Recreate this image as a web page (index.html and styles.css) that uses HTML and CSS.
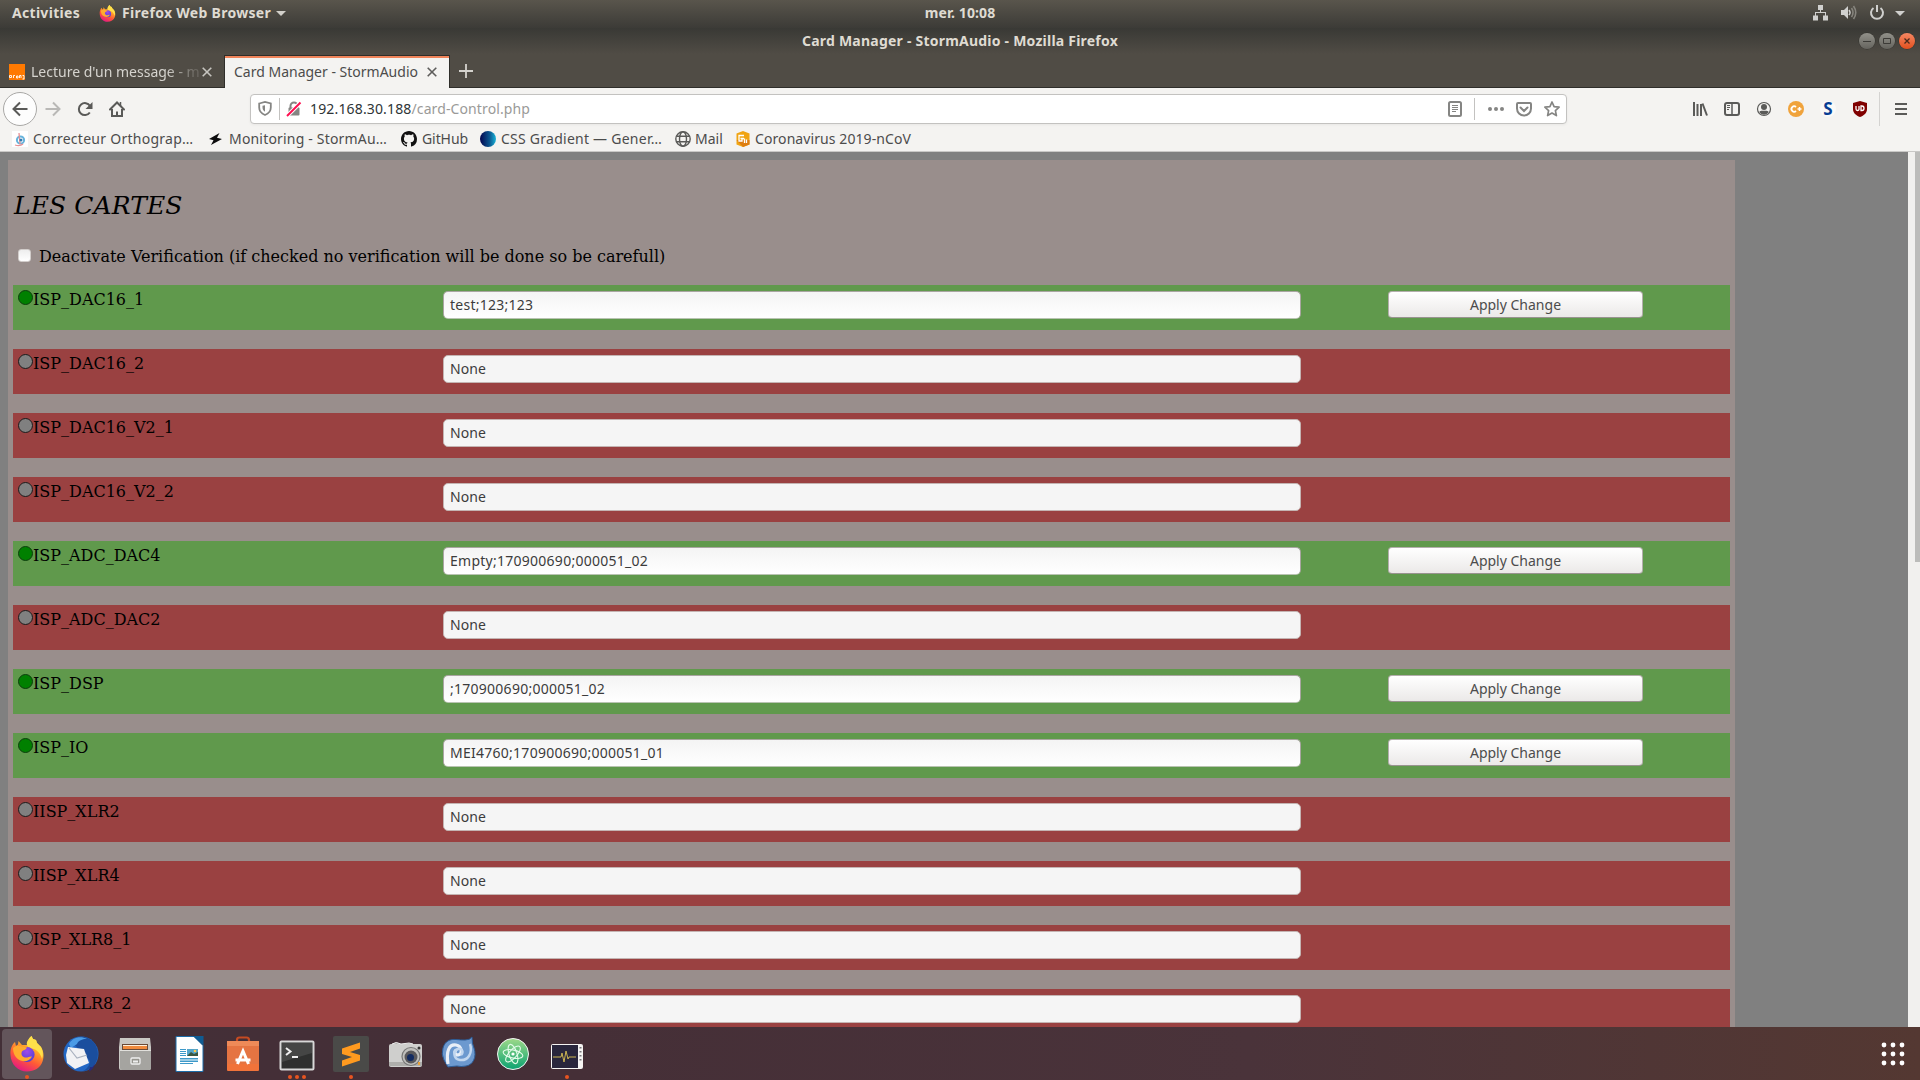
FILE: index.html
```html
<!DOCTYPE html>
<html lang="en">
<head>
<meta charset="utf-8">
<title>Card Manager - StormAudio</title>
<link rel="stylesheet" href="styles.css">
</head>
<body>
<svg class="defs" width="0" height="0">
  <defs>
    <linearGradient id="fox" x1=".8" y1="0" x2=".3" y2="1"><stop offset="0" stop-color="#fff44f"/><stop offset=".35" stop-color="#ffa92a"/><stop offset=".65" stop-color="#ff5a36"/><stop offset="1" stop-color="#e31587"/></linearGradient>
    <radialGradient id="globe" cx=".5" cy=".3" r=".7"><stop offset="0" stop-color="#a04be8"/><stop offset="1" stop-color="#4a3fd8"/></radialGradient>
    <symbol id="firefox" viewBox="0 0 36 36">
      <path fill="url(#fox)" d="M1.500 19C1 13 3 8.500 6 6l1 4 2-1.500L9.500 5l3.500 4h5c1-4 2-7 4.500-9l1.500 3 3 1 1 3 4 4c2.500 4 3.500 9 1.500 14.500C31.500 32 25 35.500 18 35.500 9 35.500 2 28.500 1.500 19z"/>
      <path fill="#ffe04a" d="M22.500 0l1.500 3 3 1 1 3 4 4c2 4 2.500 8 1 12-1-4-3-7-6-9-4-2-8-2-9-5s2-7 4.500-9z"/>
      <circle cx="18" cy="18.500" r="7.600" fill="url(#globe)"/>
      <path fill="#ffab2e" d="M4 12c3-3 6-2.500 9-1.500 2 .5 4 .5 5 1-1 2.500-4 2.500-5 4-1.500 3 .5 5.500 3 6 3 .6 4-1.500 7-1-2 4-7 6-11.500 4C6 22 4 17 4 12z"/>
    </symbol>
  </defs>
</svg>

<header class="topbar">
  <div class="topbar-left">
    <span class="activities">Activities</span>
    <svg class="app-icon" width="17" height="17"><use href="#firefox"/></svg>
    <span class="app-name">Firefox Web Browser</span>
    <svg class="caret" width="10" height="5"><path d="M0 0h10L5 5z" fill="#d2d0ca"/></svg>
  </div>
  <span class="clock">mer. 10:08</span>
  <div class="topbar-right">
    <svg width="16" height="16" viewBox="0 0 16 16" fill="#d0d0ce"><path d="M5 0h5v5H5zM0 10.500h5v5H0zM10 10.500h5v5h-5z"/><path d="M7 5h1v3h-1zM2 7h11v1H2zM2 7h1v4H2zM12 7h1v4h-1z"/></svg>
    <svg width="16" height="16" viewBox="0 0 16 16"><path d="M0 5h3l4-4v13l-4-4H0z" fill="#d0d0ce"/><path d="M8 5q2 2.500 0 5" stroke="#d0d0ce" fill="none" stroke-width="1.500"/><path d="M10.500 3q3 4.500 0 9M12.500 1q4.500 6.500 0 13" stroke="#86847d" fill="none" stroke-width="1.600"/></svg>
    <svg width="16" height="16" viewBox="0 0 16 16" fill="none" stroke="#d0d0ce" stroke-width="2"><path d="M4.500 3a6 6 0 1 0 7 0M8 0v7"/></svg>
    <svg width="10" height="5"><path d="M0 0h10L5 5z" fill="#d0d0ce"/></svg>
  </div>
</header>

<div class="titlebar">
  <span class="window-title">Card Manager - StormAudio - Mozilla Firefox</span>
  <div class="window-buttons">
    <span class="wbtn"><svg width="16" height="16"><path d="M4 8.500h8" stroke="#3c3b37" stroke-width="1"/></svg></span>
    <span class="wbtn"><svg width="16" height="16"><path d="M4.500 5.500h7v5h-7z" fill="none" stroke="#3c3b37"/></svg></span>
    <span class="wbtn wbtn-close"><svg width="16" height="16"><path d="M5.500 5.500l5 5m0-5l-5 5" stroke="#4b2a1c" stroke-width="1.300"/></svg></span>
  </div>
</div>

<div class="tabs">
  <div class="tab">
    <svg class="tab-icon" width="16" height="16"><path fill="#ff7900" d="M0 0h16v16H0z"/><path d="M.5 11.500h2v2h-2zM4.500 14v-2.500H6M7.500 12h1.500v2H7.500zM10.500 14v-2.500h1.500V14M13.500 11.500h1.500v3.500h-1.500" stroke="#fff" stroke-width=".9" fill="none"/></svg>
    <span class="tab-label tab-label-fade">Lecture d'un message - m</span>
    <svg class="tab-close" width="10" height="10"><path d="M.7.7l8.600 8.600m0-8.600L.7 9.300" stroke="#c6c4bf" stroke-width="1.600"/></svg>
  </div>
  <div class="tab tab-active">
    <span class="tab-label">Card Manager - StormAudio</span>
    <svg class="tab-close" width="10" height="10"><path d="M.7.7l8.600 8.600m0-8.600L.7 9.300" stroke="#5e5d5b" stroke-width="1.600"/></svg>
  </div>
  <svg class="new-tab" width="14" height="14"><path d="M7 0v14M0 7h14" stroke="#d5d3ce" stroke-width="1.800"/></svg>
</div>

<div class="navbar">
  <div class="nav-left">
    <span class="back"><svg width="16" height="16" fill="none" stroke="#5a5a58" stroke-width="2"><path d="M15.500 8H1.500M8 1.500L1.500 8 8 14.500"/></svg></span>
    <svg width="16" height="16" fill="none" stroke="#b9b8b6" stroke-width="2"><path d="M.5 8h14M8 1.500L14.500 8 8 14.500"/></svg>
    <svg width="16" height="16" fill="none" stroke="#5a5a58" stroke-width="2"><path d="M12.800 11.500A6 6 0 1 1 13 5"/><path fill="#5a5a58" stroke="none" d="M15.500 1v7H8.500z"/></svg>
    <svg width="16" height="16" fill="none" stroke="#5a5a58" stroke-width="2"><path d="M1 8.500L8 1.500l7 7" stroke-linecap="round"/><path d="M3 8v7h10V8M8 15v-4.500" /><path d="M11.500 1v4" stroke-width="1.500"/></svg>
  </div>
  <div class="urlbar">
    <svg class="shield" width="14" height="15" fill="none" stroke="#858583" stroke-width="1.800"><path d="M1.200 2.500L7 1l5.800 1.500v4c0 3.500-2 6-5.800 7.500C3.200 12.500 1.200 10 1.200 6.500z"/><path d="M7 4.200v6.500C5 9.500 4.500 8 4.500 6V4.700z" fill="#858583" stroke="none"/></svg>
    <span class="url-sep"></span>
    <svg class="lock" width="16" height="16"><path d="M4.500 7V5a3.500 3.500 0 0 1 7 0v2" fill="none" stroke="#858583" stroke-width="2"/><rect x="2.500" y="6.500" width="11" height="8" rx="1" fill="#858583"/><path d="M1 15L14.500 1.500" stroke="#fff" stroke-width="4"/><path d="M1 15L14.500 1.500" stroke="#ff0f50" stroke-width="2"/></svg>
    <span class="url-host">192.168.30.188</span><span class="url-path">/card-Control.php</span>
    <div class="url-actions">
      <svg width="16" height="16" fill="none" stroke="#858583"><rect x="2" y="1" width="12" height="14" rx="1.500" stroke-width="2"/><path d="M5 4.500h6M5 6.500h6M5 8.500h6M5 10.500h4"/></svg>
      <span class="url-sep url-sep-right"></span>
      <svg width="18" height="16" fill="#858583"><circle cx="3" cy="8" r="2"/><circle cx="9" cy="8" r="2"/><circle cx="15" cy="8" r="2"/></svg>
      <svg width="16" height="16" fill="none" stroke="#858583" stroke-width="2"><path d="M2 2h12q1 0 1 1v4.500a7 7 0 0 1-14 0V3q0-1 1-1z"/><path d="M4.500 6.500L8 10l3.500-3.500" stroke-linecap="round"/></svg>
      <svg width="16" height="16" fill="none" stroke="#858583" stroke-width="1.700" stroke-linejoin="round"><path d="M8 1l2.100 4.600 5 .6-3.700 3.400 1 5L8 12.100l-4.400 2.500 1-5L.9 6.200l5-.6z"/></svg>
    </div>
  </div>
  <div class="nav-tools">
    <svg width="16" height="16" stroke="#5a5a58" stroke-width="2" fill="none"><path d="M2 1v14M5.500 3v12M9 3v12" /><path d="M10.500 2.500L15 14.500"/></svg>
    <svg width="16" height="16" stroke="#5a5a58" fill="none"><rect x="1" y="2" width="14" height="12" rx="2" stroke-width="2"/><path d="M8 2v12" stroke-width="1.500"/><path d="M3 4.500h3M3 6.500h3M3 8.500h2"/></svg>
    <svg width="16" height="16"><circle cx="8" cy="8" r="6.500" fill="none" stroke="#5a5a58" stroke-width="1.200"/><circle cx="8" cy="6" r="3" fill="#5a5a58"/><path d="M3.300 11c1-1.500 2.700-1.200 4.700-1.200s3.700-.3 4.700 1.200a5.500 5.500 0 0 1-9.400 0z" fill="#5a5a58"/></svg>
    <svg width="16" height="16"><circle cx="8" cy="8" r="8" fill="#f0a33c"/><path d="M8 6A2.700 2.700 0 1 0 8 10" fill="none" stroke="#fff" stroke-width="1.800"/><path d="M9.500 8h4M11.500 6v4" fill="none" stroke="#fff" stroke-width="1.500"/></svg>
    <span class="ext-s">S</span>
    <svg width="16" height="16"><path d="M8 0l7 2v6c0 4-3 6.500-7 8-4-1.500-7-4-7-8V2z" fill="#800000"/><path d="M4 5v3q0 1.500 1.500 1.500T7 8V5M9 5v4.500h1q2 0 2-2.200T10 5z" fill="none" stroke="#fff" stroke-width="1.300"/></svg>
  </div>
  <span class="menu-sep"></span>
  <svg class="menu" width="12" height="12"><path d="M0 1h12M0 6h12M0 11h12" stroke="#5a5a58" stroke-width="2"/></svg>
</div>

<div class="bookmarks">
  <a class="bm bm-correcteur"><svg width="16" height="16"><path fill="#fff" d="M0 0h16v16H0z"/><circle cx="8.500" cy="9" r="3.600" fill="none" stroke="#66b3dc" stroke-width="2"/><path d="M7 2l1 11M3 14q5 1.500 8-1" stroke="#e88f92" fill="none" stroke-width="1.300"/><circle cx="9" cy="9" r="1.500" fill="#357bb0"/></svg><span>Correcteur Orthograp…</span></a>
  <a class="bm bm-monitoring"><svg width="14" height="16"><path d="M10.500 2L0 8l4.500 1.200L2 14l11-6-5-1.200z" fill="#0c0c0d"/></svg><span>Monitoring - StormAu…</span></a>
  <a class="bm bm-github"><svg width="16" height="16" viewBox="0 0 16 16"><path fill="#111" d="M8 0C3.580 0 0 3.580 0 8c0 3.540 2.290 6.530 5.470 7.590.4.070.55-.17.55-.38 0-.19-.01-.82-.01-1.490-2.010.37-2.530-.49-2.690-.94-.09-.23-.48-.94-.82-1.130-.28-.15-.68-.52-.01-.53.63-.01 1.080.58 1.230.82.72 1.210 1.870.87 2.330.66.07-.52.28-.87.51-1.070-1.780-.2-3.640-.89-3.640-3.950 0-.87.31-1.590.82-2.150-.08-.2-.36-1.020.08-2.120 0 0 .67-.21 2.200.82.64-.18 1.320-.27 2-.27s1.360.09 2 .27c1.530-1.040 2.200-.82 2.200-.82.44 1.100.16 1.920.08 2.120.51.56.82 1.270.82 2.150 0 3.070-1.870 3.750-3.650 3.950.29.25.54.73.54 1.480 0 1.070-.01 1.930-.01 2.200 0 .21.15.46.55.38A8.010 8.010 0 0 0 16 8c0-4.420-3.580-8-8-8z"/></svg><span>GitHub</span></a>
  <a class="bm bm-css"><i class="css-ball"></i><span>CSS Gradient — Gener…</span></a>
  <a class="bm bm-mail"><svg width="16" height="16" fill="none" stroke="#5a5a58" stroke-width="1.400"><circle cx="8" cy="8" r="7.200"/><ellipse cx="8" cy="8" rx="3.500" ry="7.200"/><path d="M1.500 5.200h13M1.500 10.800h13"/></svg><span>Mail</span></a>
  <a class="bm bm-corona"><svg width="16" height="16"><path d="M8 0l6.500 2.500v11L8 16l-6.500-2.500v-11z" fill="#f0a412"/><path d="M1.500 9L8 16l6.500-2.500V9z" fill="#dd7d10"/><path d="M9 4.500H4v5.500h3V7.500M9.500 12V7.500m2 4.500V8.500M5.500 7.500H9" fill="none" stroke="#fff" stroke-width="1.300"/></svg><span>Coronavirus 2019-nCoV</span></a>
</div>

<div class="viewport">
  <main class="page">
    <section class="panel">
      <h1>LES CARTES</h1>
      <label class="verify"><span class="checkbox"></span><span>Deactivate Verification (if checked no verification will be done so be carefull)</span></label>
      <div class="card on"><div class="name"><i></i>ISP_DAC16_1</div><div class="field">test;123;123</div><button>Apply Change</button></div>
      <div class="card"><div class="name"><i></i>ISP_DAC16_2</div><div class="field none">None</div></div>
      <div class="card"><div class="name"><i></i>ISP_DAC16_V2_1</div><div class="field none">None</div></div>
      <div class="card"><div class="name"><i></i>ISP_DAC16_V2_2</div><div class="field none">None</div></div>
      <div class="card on"><div class="name"><i></i>ISP_ADC_DAC4</div><div class="field">Empty;170900690;000051_02</div><button>Apply Change</button></div>
      <div class="card"><div class="name"><i></i>ISP_ADC_DAC2</div><div class="field none">None</div></div>
      <div class="card on"><div class="name"><i></i>ISP_DSP</div><div class="field">;170900690;000051_02</div><button>Apply Change</button></div>
      <div class="card on"><div class="name"><i></i>ISP_IO</div><div class="field">MEI4760;170900690;000051_01</div><button>Apply Change</button></div>
      <div class="card"><div class="name"><i></i>IISP_XLR2</div><div class="field none">None</div></div>
      <div class="card"><div class="name"><i></i>IISP_XLR4</div><div class="field none">None</div></div>
      <div class="card"><div class="name"><i></i>ISP_XLR8_1</div><div class="field none">None</div></div>
      <div class="card"><div class="name"><i></i>ISP_XLR8_2</div><div class="field none">None</div></div>
    </section>
  </main>
  <div class="scrollbar"><div class="thumb"></div></div>
</div>

<footer class="dock">
  <div class="dock-items">
    <div class="app current"><svg width="36" height="36"><use href="#firefox"/></svg><div class="dots"><i></i></div></div>
    <div class="app"><svg width="36" height="36"><circle cx="18" cy="18" r="17.500" fill="#2267c4"/><path d="M8 5C15-2 27 0 32 8c4 7 4 15-1 21-3 4-8 6-11 6 4-2 7-6 7-10z" fill="#1a4e9e"/><path d="M6 8C9 2 17-1 24 3c-5-.5-9 2-10 5l-6 4z" fill="#4a9be6"/><path d="M5 11l16 2 5 14-14 6-8-6-1-8z" fill="#f1f2f4"/><path d="M6 12l8 10 10-3" fill="none" stroke="#a9b2bf" stroke-width="1.200"/><path d="M27 31q3 1 5-4-1 6-6 8.500z" fill="#282a7c"/></svg></div>
    <div class="app"><svg width="36" height="36"><path d="M3 2h30l1 9v21q0 2-2 2H4q-2 0-2-2V11z" fill="#c9c8c4"/><path d="M5 8h26v6H5z" fill="#6a4a38"/><path d="M6 9.500h24V13H6z" fill="#f08b3e"/><path d="M6 9h24v1H6z" fill="#fff0dd"/><path d="M3 14h31v18q0 2-2 2H5q-2 0-2-2z" fill="#a5a4a0"/><path d="M3 14h31v1H3z" fill="#e1e0dc"/><rect x="14" y="22" width="9" height="6" rx="1" fill="#96958f" stroke="#eee" stroke-width="1.300"/><path d="M16 24.500h5v2h-5z" fill="#eee"/></svg></div>
    <div class="app"><svg width="36" height="36"><path d="M5 .5h18l9 9V35.500H5z" fill="#fff" stroke="#1c6ca8"/><path d="M22 0h10.500v9.500z" fill="#0f5c93"/><path d="M9 13h6v1H9zm0 2h6v1H9zm0 2h6v1H9zm0 2h6v1H9zm0 3h18v1.500H9zm0 2.500h18V26H9zm0 2.500h13v1H9z" fill="#3d99c9"/><path d="M16 13h11v7H16z" fill="#53a5cb"/><path d="M16 20l4-4 3 2 4-2v4z" fill="#395742"/><circle cx="24" cy="15" r="1.300" fill="#ffc84a"/></svg></div>
    <div class="app"><svg width="36" height="36"><path d="M12 8V4q0-2.500 2.500-2.500h7Q24 1.500 24 4v4" fill="none" stroke="#c64b22" stroke-width="2.200"/><path d="M2 5h32v24H2z" fill="#e57442"/><path d="M2 28h32v6q0 1-1 1H3q-1 0-1-1z" fill="#f1733a"/><path d="M2 5h32v5H2z" fill="#ee8a58"/><path d="M12.500 28L18 15l5.500 13M10.500 24h15" fill="none" stroke="#fff" stroke-width="3"/></svg></div>
    <div class="app"><svg width="36" height="36"><rect x="1.500" y="5.500" width="33" height="28" rx="1" fill="#2f302f" stroke="#d8d8d8" stroke-width="2"/><path d="M3 7h30v10L3 26z" fill="#454645"/><path d="M7 12l4.500 3.500L7 19M13 21h6" stroke="#eee" stroke-width="2" fill="none"/></svg><div class="dots"><i></i><i></i><i></i></div></div>
    <div class="app"><svg width="36" height="36"><rect width="36" height="36" rx="2" fill="#4a4a48"/><path d="M9 12.500L27 6.500v6l-10 3.500 10 3v5.500L9 30.500v-6l10-3.500-10-3z" fill="#ff9a1f"/></svg><div class="dots"><i></i></div></div>
    <div class="app"><svg width="36" height="36"><rect x="2" y="8" width="33" height="23" rx="2" fill="#cfcfcd"/><path d="M5 8q4-3 9 0l8-1 4 1" fill="#b1b1ae" stroke="#eee"/><path d="M2 26h33v4H2z" fill="#aeaeab"/><circle cx="24" cy="20.500" r="9" fill="#c0c0bd" stroke="#777" stroke-width="1.200"/><circle cx="24" cy="21" r="6.500" fill="#59585b"/><circle cx="23.500" cy="21.500" r="3.500" fill="#132b60"/><circle cx="32" cy="12" r="1.500" fill="#333"/><path d="M31 26h2v3h-2z" fill="#e9a23b"/></svg></div>
    <div class="app"><svg width="36" height="36"><path d="M2 12C4 5 9 3 15 3.500q5 .5 9 .5 5 0 7-3 0 7 2 11c3 9-1 17-8 18q-5 1-9 0-6 .5-9 1-2-3-4-7-3-6-1-12z" fill="#6c99cf" stroke="#2c5c96"/><path d="M7 28C5 15 8 8 15 9c6 1 7 9 2 10-4 0-4-5-1-5" fill="none" stroke="#e9eff7" stroke-width="3.200"/><path d="M29 8c3 9-2 17-10 16-7-1-7-9-2-11 4-1 6 3 3 6" fill="none" stroke="#c2d7ef" stroke-width="2.500"/></svg></div>
    <div class="app"><svg width="36" height="36"><defs><linearGradient id="atom" x2="0" y2="1"><stop stop-color="#9ed989"/><stop offset="1" stop-color="#0ba371"/></linearGradient></defs><circle cx="18" cy="18" r="15.500" fill="url(#atom)" stroke="#f4f4f4"/><g fill="none" stroke="#e3fbe9" stroke-width="1.100"><ellipse cx="18" cy="18" rx="10" ry="4" transform="rotate(12 18 18)"/><ellipse cx="18" cy="18" rx="10" ry="4" transform="rotate(72 18 18)"/><ellipse cx="18" cy="18" rx="10" ry="4" transform="rotate(132 18 18)"/></g><circle cx="18" cy="18" r="1.600" fill="#fff"/></svg></div>
    <div class="app"><svg width="36" height="36"><rect x="2" y="8" width="32" height="25" rx="2" fill="#f5f4f2"/><rect x="3" y="9" width="26" height="23" fill="#29263c"/><path d="M4 21h6l2 0 1-4 2 9 2-11 2 8 1-2h7" fill="none" stroke="#cdb552" stroke-width="1"/><path d="M31.500 11v14" stroke="#77757a" stroke-width="2" stroke-dasharray="1.500 2.500"/></svg><div class="dots"><i></i></div></div>
  </div>
  <svg class="show-apps" width="24" height="24" fill="#fff"><g id="r"><circle cx="3" cy="3" r="2.400"/><circle cx="12" cy="3" r="2.400"/><circle cx="21" cy="3" r="2.400"/></g><use href="#r" y="9"/><use href="#r" y="18"/></svg>
</footer>
</body>
</html>
```
FILE: styles.css
```css
* { box-sizing: border-box; }
body {
  margin: 0;
  width: 1920px;
  height: 1080px;
  overflow: hidden;
  display: flex;
  flex-direction: column;
  font: 14px/20px "Noto Sans", sans-serif;
  color: #4c4c4c;
  white-space: nowrap;
}
svg { display: block; flex: none; }
.defs { position: absolute; }

/* Desktop top bar */
.topbar {
  flex: none;
  height: 28px;
  padding: 0 15px 2px 12px;
  display: grid;
  grid-template-columns: 1fr auto 1fr;
  align-items: center;
  background: linear-gradient(#59554c, #3c3b37);
  color: #dfdbd2;
  font-weight: 700;
}
.topbar-left { display: flex; align-items: center; }
.activities { letter-spacing: .3px; width: 87px; }
.app-icon { margin-right: 6px; }
.app-name { letter-spacing: .3px; width: 154px; }
.clock { letter-spacing: .09px; margin-left: 3px; }
.topbar-right { display: flex; align-items: center; justify-content: flex-end; }
.topbar-right svg + svg { margin-left: 12px; }
.topbar-right svg:last-child { margin-left: 10px; }

/* Window title bar */
.titlebar {
  flex: none;
  height: 26px;
  display: grid;
  grid-template-columns: 1fr auto 1fr;
  align-items: center;
  padding-right: 5px;
  background: linear-gradient(#393935, #504c45);
  color: #dfdbd2;
  font-weight: 700;
}
.window-title { grid-column: 2; letter-spacing: .225px; margin-top: -1px; margin-left: 5px; }
.window-buttons { display: flex; gap: 4px; justify-content: flex-end; }
.wbtn {
  width: 16px;
  height: 16px;
  border-radius: 50%;
  background: linear-gradient(#92918a, #65645e);
  box-shadow: 0 0 0 .5px #33322e;
}
.wbtn-close { background: linear-gradient(#f58763, #e3501e); }

/* Tab strip */
.tabs {
  flex: none;
  height: 34px;
  display: flex;
  background: #504c45;
  box-shadow: inset 0 -1px #2f2e2a;
  color: #d5d3ce;
}
.tab {
  width: 224px;
  padding: 2px 12px 0 9px;
  display: flex;
  align-items: center;
}
.tab-icon { margin-right: 6px; }
.tab-label-fade {
  width: 171px;
  margin-right: -8px;
  -webkit-mask-image: linear-gradient(90deg, #000 135px, #0003 164px);
  mask-image: linear-gradient(90deg, #000 135px, #0003 164px);
}
.tab-close { margin-left: auto; }
.tab-active {
  width: 226px;
  margin-top: 1px;
  padding: 0 12px 1px 9px;
  background: #f4f3f1;
  color: #4c4c4c;
  border: solid #2f2e2a;
  border-width: 1px 1px 0;
  box-shadow: inset 0 2px #f0845a;
}
.new-tab { margin: 10px 0 0 9px; }

/* Navigation bar */
.navbar {
  flex: none;
  height: 41px;
  padding-left: 3px;
  display: flex;
  align-items: center;
  background: #f4f3f1;
}
.nav-left { width: 247px; display: flex; align-items: center; gap: 16px; }
.back {
  width: 34px;
  height: 34px;
  margin-right: -8px;
  border: 1px solid #a9a8a6;
  border-radius: 50%;
  background: #fdfdfd;
  display: grid;
  place-items: center;
}
.urlbar {
  width: 1317px;
  height: 30px;
  padding-left: 7px;
  display: flex;
  align-items: center;
  background: #fff;
  border: 1px solid #c3c2c0;
  border-radius: 4px;
  box-shadow: 0 1px 3px #0000000d;
}
.url-sep { width: 1px; height: 22px; background: #c3c2c0; margin: 0 6px 0 7px; }
.lock { margin-right: 8px; }
.url-host { color: #2e3436; letter-spacing: .154px; }
.url-path { color: #9a9a98; letter-spacing: .11px; }
.url-actions { margin-left: auto; padding-right: 6px; display: flex; align-items: center; gap: 12px; }
.url-sep-right { margin: 0; }
.url-actions svg:first-child { margin-right: -1px; }
.url-actions svg:nth-child(3) { margin-right: -1px; }
.nav-tools { margin-left: 125px; display: flex; align-items: center; gap: 16px; }
.ext-s { width: 16px; font: 700 17px/16px "Open Sans", sans-serif; color: #063e94; background: #fff8; border-radius: 50%; text-align: center; }
.menu-sep { width: 1px; height: 34px; background: #d4d3d1; margin-left: 11px; }
.menu { margin-left: 15px; }

/* Bookmarks toolbar */
.bookmarks {
  flex: none;
  height: 23px;
  padding: 0 0 2px 12px;
  display: flex;
  align-items: center;
  background: #f4f3f1;
  border-bottom: 1px solid #c9c8c6;
}
.bm { display: flex; align-items: center; gap: 5px; }
.bm-correcteur { width: 197px; letter-spacing: .27px; }
.bm-monitoring { width: 192px; gap: 6px; letter-spacing: .185px; }
.bm-github { width: 79px; letter-spacing: -.08px; }
.bm-css { width: 195px; letter-spacing: .25px; }
.bm-mail { width: 60px; gap: 4px; }
.bm-corona { gap: 4px; letter-spacing: .085px; }
.css-ball { width: 16px; height: 16px; border-radius: 50%; background: linear-gradient(90deg, #04054f, #0b5790 60%, #18b4d8); }

/* Web page */
.viewport { flex: none; height: 875px; display: flex; overflow: hidden; background: #808080; }
.page { flex: 1; padding: 8px; font: 16px/19px "DejaVu Serif", serif; color: #000; }
.panel { width: 1727px; padding: 5px 5px 30px; background: #998e8c; }
h1 { margin: 26px 0 0 1px; font: italic 25px/30px "DejaVu Serif", serif; letter-spacing: .1px; }
.verify { display: flex; align-items: center; height: 19px; margin: 26px 0 19px 5px; }
.checkbox { width: 13px; height: 13px; margin: -2px 8px 0 0; background: linear-gradient(#eee, #fff); border: 1px solid #d2cdcb; border-radius: 3px; }
.card {
  height: 45px;
  margin-bottom: 19px;
  padding: 5px;
  display: grid;
  grid-template-columns: 425px 857px 88px 255px;
  align-items: start;
  background: #9a4141;
}
.card.on { background: #60994c; }
.name { display: flex; }
.name i { width: 15px; height: 15px; border: 1px solid #1b1b1b; border-radius: 50%; background: #808080; }
.on .name i { background: #008000; border-color: #0c3f0c; }
.field {
  width: 858px;
  height: 28px;
  margin-top: 1px;
  padding: 0 6px;
  font: 14px/26px "Noto Sans", sans-serif;
  letter-spacing: .26px;
  color: #3c3c3c;
  background: linear-gradient(#f4f4f4, #fff);
  border: 1px solid #a9a5a1;
  border-bottom-color: #b9c4b2;
  border-radius: 5px;
}
.field.none { background: #f5f5f5; border-color: #c4b4b2; letter-spacing: .08px; }
button {
  grid-column: 4;
  height: 27px;
  margin-top: 1px;
  padding: 0;
  font: 14px/24px "Noto Sans", sans-serif;
  color: #4c4c4c;
  background: linear-gradient(#fff, #ebe9e8);
  border: 1px solid #b3aeac;
  border-bottom-color: #98948f;
  border-radius: 4px;
}
.scrollbar { width: 12px; background: #f1f0ee; display: flex; justify-content: flex-end; }
.thumb { width: 5px; height: 410px; background: #bcbcba; }

/* Dock */
.dock {
  flex: none;
  height: 53px;
  padding: 0 15px 0 2px;
  display: flex;
  justify-content: space-between;
  align-items: center;
  background: linear-gradient(90deg, #432f37, #452f37 30%, #4a333a 65%, #543832);
}
.dock-items { display: flex; gap: 4px; padding-top: 1px; }
.app { position: relative; width: 50px; height: 50px; display: grid; place-items: center; }
.current { background: #63555b; border-radius: 4px; }
.dots { position: absolute; left: 0; right: 0; bottom: 0; display: flex; justify-content: center; gap: 3px; }
.dots i { width: 4px; height: 4px; border-radius: 50%; background: #e95420; }
```
